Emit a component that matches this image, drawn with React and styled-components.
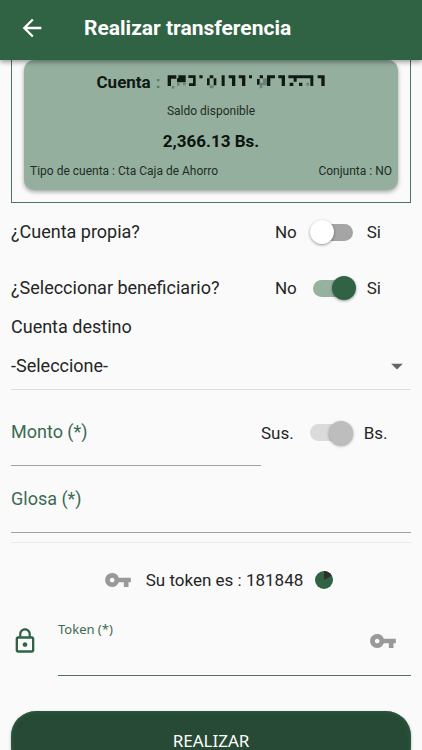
import React from "react";
import styled, { createGlobalStyle } from "styled-components";
import { MdArrowBack, MdArrowDropDown, MdLockOutline, MdVpnKey } from "react-icons/md";

const GlobalStyle = createGlobalStyle`
  *, *::before, *::after { box-sizing: border-box; }
  body { margin: 0; background: #fafafa; }
  button, input, select { font: inherit; color: inherit; }
`;

const Screen = styled.div`
  display: flex;
  flex-direction: column;
  height: 100vh;
  background: #fafafa;
  color: #252525;
  font: 18px/22px Roboto, sans-serif;
`;

const AppBar = styled.header`
  display: flex;
  align-items: center;
  flex: none;
  gap: 38px;
  height: 60px;
  padding: 0 18px 4px;
  background: #306344;
  color: #fff;
  box-shadow: 0 2px 5px rgba(0, 0, 0, 0.4);
  z-index: 1;
`;

const Title = styled.h1`
  margin: 0;
  font-size: 21px;
  line-height: 26px;
  font-weight: 700;
`;

const IconButton = styled.button`
  display: flex;
  flex: none;
  padding: 0;
  border: 0;
  background: none;
  color: ${(p) => p.$color};
  font-size: 28px;
  line-height: 1;
`;

const Content = styled.main`
  flex: 1;
  min-height: 0;
  overflow-y: auto;
  scrollbar-width: none;
  padding: 0 11px 20px;
`;

const AccountFrame = styled.section`
  padding: 0 12px 12px;
  border: 1px solid #4a7560;
  border-top: 0;
`;

const AccountCard = styled.div`
  display: flex;
  flex-direction: column;
  align-items: center;
  gap: 10px;
  padding: 12px 6px 10px;
  border-radius: 10px;
  background: #95af9f;
  box-shadow: 0 2px 4px rgba(0, 0, 0, 0.35);
  color: #1f2c25;
`;

const AccountNumber = styled.div`
  display: flex;
  align-items: center;
  gap: 5px;
  color: #101a14;
  font-size: 17px;
  line-height: 20px;
  font-weight: 700;
`;

const Colon = styled.span`
  color: #62766a;
`;

const Caption = styled.div`
  font-size: 12px;
  line-height: 18px;
`;

const Balance = styled.div`
  color: #0c140f;
  font-size: 17px;
  line-height: 22px;
  font-weight: 700;
`;

const AccountDetails = styled.div`
  display: flex;
  justify-content: space-between;
  align-self: stretch;
  font-size: 12px;
  line-height: 18px;
`;

const Options = styled.div`
  padding-top: 1px;
`;

const OptionRow = styled.div`
  display: flex;
  align-items: center;
  justify-content: space-between;
  height: 56px;
`;

const SwitchGroup = styled.div`
  display: flex;
  align-items: center;
  padding-right: ${(p) => p.$end}px;
  font-size: 17px;
`;

const Toggle = styled.input`
  appearance: none;
  display: flex;
  align-items: center;
  flex: none;
  width: 46px;
  height: 24px;
  margin: 0 11px 0 13px;

  &::before {
    content: "";
    width: 40px;
    height: 17px;
    margin-left: 3px;
    border-radius: 9px;
    background: #a5a5a5;
  }

  &::after {
    content: "";
    width: 24px;
    height: 24px;
    flex: none;
    margin-left: -43px;
    border-radius: 50%;
    background: #fff;
    box-shadow: 0 1px 3px rgba(0, 0, 0, 0.4);
  }

  &:checked::before { background: #97b1a1; }
  &:checked::after { margin-left: -21px; background: #306344; }
  &:disabled::before { background: #dbdbdb; }
  &:disabled::after { background: #bdbdbd; }
`;

const DestinationLabel = styled.label`
  display: block;
`;

const SelectBox = styled.div`
  display: grid;
  align-items: center;
  height: 48px;
  margin-top: 4px;
  border-bottom: 1px solid #dedede;

  > * { grid-area: 1 / 1; }
  > svg { justify-self: end; color: #666; font-size: 28px; pointer-events: none; }
`;

const Select = styled.select`
  appearance: none;
  width: 100%;
  height: 40px;
  padding: 0;
  border: 0;
  background: none;
`;

const AmountRow = styled.div`
  display: flex;
  align-items: center;
  justify-content: space-between;
  margin-top: 9px;
`;

const Field = styled.div`
  display: grid;
  align-items: center;
  flex: none;
  width: ${(p) => p.$width};
  height: 67px;
  border-bottom: 1px solid #9da3a0;
  color: #3b6b50;

  > * { grid-area: 1 / 1; }
`;

const TextInput = styled.input`
  width: 100%;
  height: 40px;
  padding: 0;
  border: 0;
  outline: 0;
  background: none;
  color: #252525;
`;

const TokenInfo = styled.div`
  display: flex;
  align-items: center;
  justify-content: center;
  height: 64px;
  margin-top: 9px;
  padding: 10px 0 0 15px;
  border-top: 1px solid #ebebeb;
  font-size: 17px;

  > svg:first-child { margin-right: 14px; color: #999; font-size: 28px; }
  > svg:last-child { margin-left: 12px; }
`;

const TokenRow = styled.div`
  display: flex;
  align-items: center;
  gap: 19px;
  height: 70px;

  > svg { flex: none; color: #306344; font-size: 28px; }
`;

const TokenField = styled.div`
  display: grid;
  grid-template-columns: 1fr auto;
  grid-template-rows: 34px 1fr;
  align-self: stretch;
  flex: 1;
  padding-right: 14px;
  border-bottom: 1px solid #4a7560;

  > button { grid-area: 1 / 2 / 3 / 3; align-self: center; }
`;

const TokenLabel = styled.label`
  align-self: end;
  color: #3b6b50;
  font: 13px/22px "Noto Sans", sans-serif;
`;

const TokenInput = styled(TextInput)`
  height: 34px;
  grid-area: 2 / 1;
`;

const SubmitButton = styled.button`
  width: 100%;
  height: 60px;
  margin-top: 35px;
  padding: 0;
  border: 0;
  border-radius: 25px;
  background: #264a35;
  box-shadow: inset 0 0 5px #306344, 0 1px 3px rgba(0, 0, 0, 0.3);
  color: #fff;
  font: 17px/18px "Noto Sans", sans-serif;
`;

function MaskedNumber() {
  return (
    <svg width="160" height="14" viewBox="45 27 480 42" role="img" aria-label="Número oculto">
      <path
        fill="#101a14"
        d="M50 28h26v10h-16v22h-10zM78 37h4v-9h22v21h-26zM112 28h22v32h-20v-8h12v-16h-14zM145 28h10v9h-10zM168 37h8v21h-8zM176 28h11v9h-11zM188 37h8v21h-8zM212 28h9v32h-9zM233 28h20v32h-10v-23h-10zM263 28h20v32h-10v-23h-10zM294 28h9v9h-9zM318 39h8v17h-8zM326 28h10v9h-10zM348 28h24v9h-14v23h-10zM382 28h20v32h-10v-23h-10zM412 28h75v32h-9v-23h-41v10h-9v-10h-16zM416 50h11v10h-11zM444 50h10v10h-10zM500 28h21v32h-10v-23h-11z"
      />
      <path
        fill="#6d8275"
        d="M62 60h8v8h-8zM78 50h8v9h-8zM96 50h8v8h-8zM176 58h12v9h-12zM336 37h12v13h-12zM326 50h8v17h-8zM334 50h14v8h-14zM466 50h8v9h-8z"
      />
    </svg>
  );
}

function TokenTimer() {
  return (
    <svg width="18" height="18" viewBox="0 0 18 18" role="img" aria-label="Tiempo restante">
      <circle cx="9" cy="9" r="9" fill="#306344" />
      <path d="M9 9V0a9 9 0 0 1 7.8 4.5z" fill="#2c302e" />
    </svg>
  );
}

function Switch({ name, off, on, end = 30, ...rest }) {
  return (
    <SwitchGroup $end={end}>
      <span>{off}</span>
      <Toggle type="checkbox" role="switch" aria-label={name} {...rest} />
      <span>{on}</span>
    </SwitchGroup>
  );
}

export default function App() {
  return (
    <Screen>
      <GlobalStyle />
      <AppBar>
        <IconButton type="button" $color="#fff" aria-label="Volver">
          <MdArrowBack />
        </IconButton>
        <Title>Realizar transferencia</Title>
      </AppBar>
      <Content>
        <AccountFrame>
          <AccountCard>
            <AccountNumber>
              Cuenta <Colon>:</Colon>
              <MaskedNumber />
            </AccountNumber>
            <Caption>Saldo disponible</Caption>
            <Balance>2,366.13 Bs.</Balance>
            <AccountDetails>
              <span>Tipo de cuenta : Cta Caja de Ahorro</span>
              <span>Conjunta : NO</span>
            </AccountDetails>
          </AccountCard>
        </AccountFrame>
        <Options>
          <OptionRow>
            <span>¿Cuenta propia?</span>
            <Switch name="¿Cuenta propia?" off="No" on="Si" />
          </OptionRow>
          <OptionRow>
            <span>¿Seleccionar beneficiario?</span>
            <Switch name="¿Seleccionar beneficiario?" off="No" on="Si" defaultChecked />
          </OptionRow>
        </Options>
        <DestinationLabel htmlFor="destino">Cuenta destino</DestinationLabel>
        <SelectBox>
          <Select id="destino">
            <option>-Seleccione-</option>
          </Select>
          <MdArrowDropDown />
        </SelectBox>
        <AmountRow>
          <Field $width="62.5%">
            <label htmlFor="monto">Monto (*)</label>
            <TextInput id="monto" inputMode="decimal" />
          </Field>
          <Switch name="Moneda" off="Sus." on="Bs." end={26} defaultChecked disabled />
        </AmountRow>
        <Field $width="100%">
          <label htmlFor="glosa">Glosa (*)</label>
          <TextInput id="glosa" />
        </Field>
        <TokenInfo>
          <MdVpnKey />
          <span>Su token es : 181848</span>
          <TokenTimer />
        </TokenInfo>
        <TokenRow>
          <MdLockOutline />
          <TokenField>
            <TokenLabel htmlFor="token">Token (*)</TokenLabel>
            <TokenInput id="token" />
            <IconButton type="button" $color="#999" aria-label="Usar token">
              <MdVpnKey />
            </IconButton>
          </TokenField>
        </TokenRow>
        <SubmitButton type="submit">REALIZAR</SubmitButton>
      </Content>
    </Screen>
  );
}
